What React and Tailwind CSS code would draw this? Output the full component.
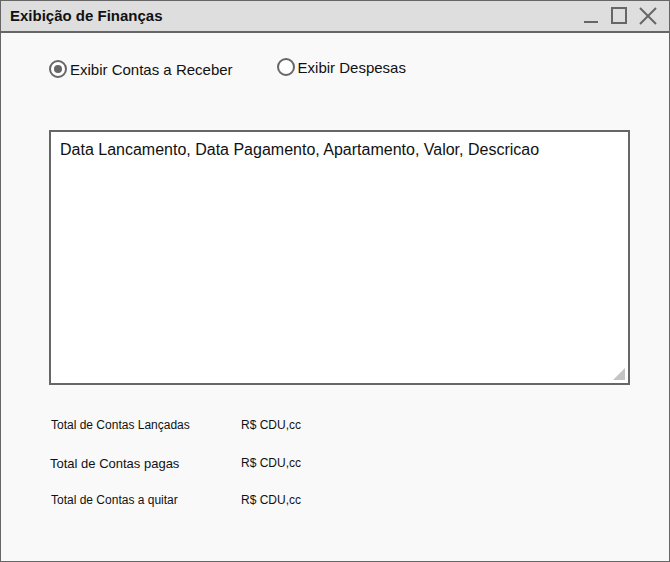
import React from "react";

const font = { fontFamily: '"Liberation Sans", Arial, sans-serif' };

function Radio({ checked, label, className = "" }) {
  return (
    <div className={"flex items-center " + className}>
      <span className="w-[18px] h-[18px] rounded-full border-2 border-[#666] bg-white flex items-center justify-center shrink-0">
        {checked && <span className="w-[8px] h-[8px] rounded-full bg-[#666]" />}
      </span>
      <span className="ml-[3px] text-[15px] text-[#111] leading-none">{label}</span>
    </div>
  );
}

export default function App() {
  return (
    <div
      className="w-[670px] h-[562px] border border-[#666] bg-[#f9f9f9] flex flex-col box-border"
      style={font}
    >
      <div className="h-[32px] shrink-0 bg-[#dedede] border-b-2 border-[#666] flex items-center justify-between pl-[9px] pr-[12px]">
        <span className="text-[15px] font-bold text-[#111]">Exibição de Finanças</span>
        <div className="flex items-center gap-[12px]">
          <svg width="16" height="18" viewBox="0 0 16 18">
            <line x1="1" y1="15" x2="15" y2="15" stroke="#666" strokeWidth="2" />
          </svg>
          <svg width="16" height="18" viewBox="0 0 16 18">
            <rect x="1" y="1" width="14" height="15" fill="none" stroke="#666" strokeWidth="2" />
          </svg>
          <svg width="18" height="18" viewBox="0 0 18 18">
            <path d="M1 1 L17 17 M17 1 L1 17" stroke="#666" strokeWidth="2" fill="none" />
          </svg>
        </div>
      </div>

      <div className="flex flex-col pl-[48px]">
        <div className="flex items-start mt-[25px] h-[20px]">
          <Radio checked label="Exibir Contas a Receber" className="mt-[2px]" />
          <Radio label="Exibir Despesas" className="ml-[44px]" />
        </div>

        <div className="mt-[52px] w-[581px] h-[255px] border-2 border-[#666] bg-white relative pl-[9px] pt-[6px]">
          <span className="text-[16px] text-[#111]">
            Data Lancamento, Data Pagamento, Apartamento, Valor, Descricao
          </span>
          <svg className="absolute right-[2px] bottom-[2px]" width="14" height="14" viewBox="0 0 14 14">
            <path d="M13 1 L13 13 L1 13 Z" fill="#c4c4c4" />
          </svg>
        </div>

        <div className="flex flex-col text-[#111]">
          <div className="flex items-center h-[16px] mt-[32px] pl-[2px]">
            <span className="w-[190px] text-[12px]">Total de Contas Lançadas</span>
            <span className="text-[12px]">R$ CDU,cc</span>
          </div>
          <div className="flex items-center h-[16px] mt-[23px] pl-[1px]">
            <span className="w-[191px] text-[13px]">Total de Contas pagas</span>
            <span className="text-[12px] -mt-[2px]">R$ CDU,cc</span>
          </div>
          <div className="flex items-center h-[16px] mt-[20px] pl-[2px]">
            <span className="w-[190px] text-[12px]">Total de Contas a quitar</span>
            <span className="text-[12px]">R$ CDU,cc</span>
          </div>
        </div>
      </div>
    </div>
  );
}
